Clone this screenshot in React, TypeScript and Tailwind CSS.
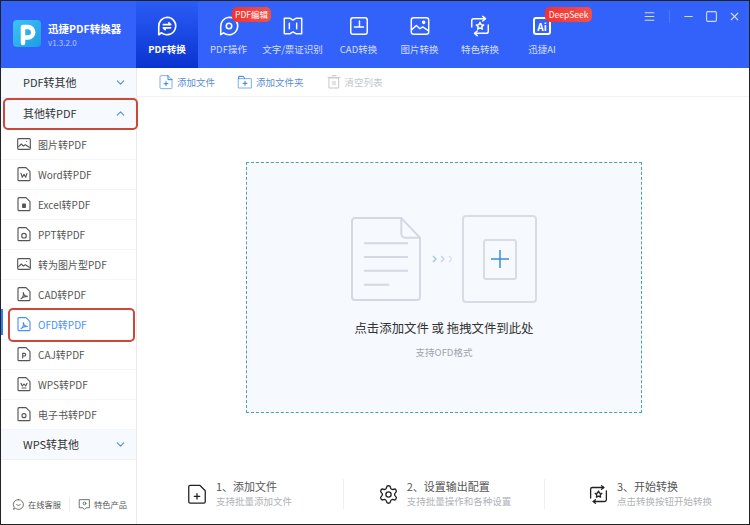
import type { ReactNode } from "react";
import { ChevronDown, ChevronUp, Menu, Minus, Settings, Square, X } from "lucide-react";

type TabInfo = { label: string; width: string; icon: ReactNode; badge?: string; badgeClass?: string };

function Ico({ size, children, sw = 1.5 }: { size: number; children: ReactNode; sw?: number }) {
  return (
    <svg width={size} height={size} viewBox="0 0 24 24" fill="none" stroke="currentColor" strokeWidth={sw} strokeLinecap="round" strokeLinejoin="round">
      {children}
    </svg>
  );
}

const filePath = "M3 4a1.500 1.500 0 0 1 1.500-1.500H15l6 6v12a1.500 1.500 0 0 1-1.500 1.500h-15A1.500 1.500 0 0 1 3 20.500z";

const tabs: TabInfo[] = [
  {
    label: "PDF操作",
    width: "w-[61px]",
    badge: "PDF编辑",
    badgeClass: "left-[34px] w-[39px]",
    icon: (
      <Ico size={22} sw={1.7}>
        <path d="M12 2.500a9.500 9.500 0 1 1-6 16.900L3 21.500v-9a9.500 9.500 0 0 1 9-10z" />
        <circle cx="12" cy="12" r="3" />
      </Ico>
    ),
  },
  {
    label: "文字/票证识别",
    width: "w-[67px]",
    icon: (
      <Ico size={22} sw={1.6}>
        <path d="M2.500 3.500h6l3.500 2 3.500-2h6v17h-6l-3.500-2-3.500 2h-6z" />
        <path d="M8 9v6M16 9v6" />
      </Ico>
    ),
  },
  {
    label: "CAD转换",
    width: "w-[65px]",
    icon: (
      <Ico size={22} sw={1.6}>
        <rect x="3" y="3" width="18" height="18" rx="2.500" />
        <path d="M12.500 6.500v6.500M7 13h10" />
      </Ico>
    ),
  },
  {
    label: "图片转换",
    width: "w-[57px]",
    icon: (
      <Ico size={22} sw={1.6}>
        <rect x="2.500" y="3" width="19" height="18" rx="2.500" />
        <path d="M3 16l5-4.500 4 3.500 3-2 6 4" />
        <circle cx="16" cy="8" r="1.200" fill="currentColor" />
      </Ico>
    ),
  },
  {
    label: "特色转换",
    width: "w-[64px]",
    icon: (
      <Ico size={22} sw={1.6}>
        <path d="M17 4H5a2 2 0 0 0-2 2v7M7 20h12a2 2 0 0 0 2-2v-7" />
        <path d="M15 1.500L18 4l-3 2.500M9 17.500L6 20l3 2.500" />
        <path d="M12 8l1.200 2.500 2.800.300-2 1.900.500 2.800-2.500-1.400-2.500 1.400.500-2.800-2-1.900 2.800-.300z" />
      </Ico>
    ),
  },
  {
    label: "迅捷AI",
    width: "w-[60px]",
    badge: "DeepSeek",
    badgeClass: "left-[33px] w-[47px]",
    icon: (
      <div className="flex h-[18px] w-[18px] items-center justify-center rounded-[3px] border-2 border-white text-[10px] font-bold text-white">
        Ai
      </div>
    ),
  },
];

const pictureMark = <path d="M4 16l4-4 3 3 3-2 6 4M16 8h.01" />;
const pdfMark = <path d="M7.500 19c2.500-1.500 4-6 3.500-9 .5 3 3 5.500 6 5.500-3.500 0-7 1-9.500 3.500z" />;

const items: { label: string; mark: ReactNode }[] = [
  { label: "图片转PDF", mark: pictureMark },
  { label: "Word转PDF", mark: <path d="M7.500 11l2 6 2.500-4.500 2.500 4.500 2-6" /> },
  { label: "Excel转PDF", mark: <path d="M10 12h4v5h-4z" fill="currentColor" /> },
  { label: "PPT转PDF", mark: <circle cx="12" cy="14.500" r="3.500" /> },
  { label: "转为图片型PDF", mark: pictureMark },
  { label: "CAD转PDF", mark: pdfMark },
  { label: "OFD转PDF", mark: pdfMark },
  { label: "CAJ转PDF", mark: <path d="M10 18v-7h2.500a2 2 0 0 1 0 4H10" /> },
  { label: "WPS转PDF", mark: <path d="M7.500 11l2 4 2.500-3 2.500 3 2-4M9 18h6" /> },
  { label: "电子书转PDF", mark: <circle cx="12" cy="14.500" r="3" /> },
];

function SideItem({ label, mark }: { label: string; mark: ReactNode }) {
  const active = label === "OFD转PDF";
  const square = label === "图片转PDF" || label === "转为图片型PDF";
  return (
    <div className={`relative flex h-[30px] items-center gap-[6px] border-b border-[#f4f5f7] pb-px pl-[15px] text-[10px] ${active ? "text-[#4a90f5]" : "text-[#555]"}`}>
      {active && <div className="absolute bottom-[4px] left-0 top-[-1px] w-[2px] bg-[#2f7bf0]" />}
      <Ico size={16} sw={1.700}>
        {square ? <rect x="2.500" y="4" width="19" height="16" rx="1.500" /> : <path d={filePath} />}
        {mark}
      </Ico>
      <span>{label}</span>
      {active && <div className="absolute -top-[2px] bottom-[-3px] left-[7px] right-[1px] rounded-[5px] border-2 border-[#c9483a]" />}
    </div>
  );
}

function GroupRow({ label, open }: { label: string; open?: boolean }) {
  return (
    <div className={`flex items-center justify-between bg-[#f6f9fd] pl-[22px] pr-[9px] text-[11px] text-[#333] ${open ? "relative h-[32px] pb-[2px]" : "h-[30px] border-b border-[#eef0f3]"}`}>
      <span>{label}</span>
      {open ? <ChevronUp size={13} className="text-[#4a90d9]" /> : <ChevronDown size={13} className="text-[#4a90d9]" />}
      {open && <div className="absolute inset-y-0 left-[2px] right-[-2px] rounded-[5px] border-2 border-[#c9483a]" />}
    </div>
  );
}

function ToolButton({ label, icon, muted }: { label: string; icon: ReactNode; muted?: boolean }) {
  return (
    <div className={`flex items-center gap-[3px] text-[9.500px] ${muted ? "text-[#c4c7cc]" : "text-[#5b8fd6]"}`}>
      {icon}
      <span>{label}</span>
    </div>
  );
}

function Step({ title, desc, icon, width }: { title: string; desc: string; icon: ReactNode; width: string }) {
  return (
    <div className={`flex items-center justify-center gap-[8px] ${width}`}>
      <div className="text-[#222]">{icon}</div>
      <div>
        <div className="text-[11px] leading-[15px] text-[#555]">{title}</div>
        <div className="text-[9.500px] leading-[15px] text-[#b0b3b8]">{desc}</div>
      </div>
    </div>
  );
}

export default function App() {
  return (
    <div className="flex h-[525px] w-[750px] flex-col overflow-hidden border border-[#222] bg-white font-['Noto_Sans_CJK_SC','Noto_Sans',sans-serif]">
      <header className="flex h-[67px] shrink-0 bg-[#3362fb] text-white">
        <div className="flex w-[135px] shrink-0 items-start pl-[12px] pt-[19px]">
          <div className="flex h-[27px] w-[28px] items-center justify-center rounded-[4px] bg-gradient-to-br from-[#3cc4f5] to-[#1c9de2]">
            <svg width="24" height="24" viewBox="0 0 24 24" fill="none" stroke="#fff" strokeWidth="4.500" strokeLinecap="round" strokeLinejoin="round">
              <path d="M8 21V5h5a5 5 0 0 1 0 10.500h-3" />
            </svg>
          </div>
          <div className="ml-[7px]">
            <div className="text-[10.500px] font-bold leading-[17px]">迅捷PDF转换器</div>
            <div className="text-[8px] leading-[12px] text-[#b9c9fb]">v1.3.2.0</div>
          </div>
        </div>

        <div className="flex w-[62px] flex-col items-center bg-gradient-to-b from-[#2b5cf6] to-[#0a33cf] pt-[14px]">
          <Ico size={22} sw={1.800}>
            <path d="M12 2.500a9.500 9.500 0 1 1-6 16.900L3 21.500v-9a9.500 9.500 0 0 1 9-10z" />
            <path d="M8 10.500h8l-2-2M16 14H8l2 2" />
          </Ico>
          <span className="mt-[4px] text-[9.500px] font-bold leading-[16px]">PDF转换</span>
        </div>

        {tabs.map((t) => (
          <div key={t.label} className={`relative flex flex-col items-center pt-[14px] ${t.width}`}>
            <div className="flex h-[22px] items-center">{t.icon}</div>
            <span className="mt-[4px] whitespace-nowrap text-[9.500px] leading-[16px] text-[#d4defd]">{t.label}</span>
            {t.badge && (
              <div className={`absolute top-[6px] flex h-[15px] items-center justify-center rounded-[5px] bg-gradient-to-r from-[#f5302c] to-[#f2504a] text-[8.500px] text-white ${t.badgeClass}`}>
                {t.badge}
              </div>
            )}
          </div>
        ))}

        <div className="ml-auto flex items-start pr-[8px] pt-[9px] text-[#cfdafd]">
          <Menu size={13} />
          <div className="ml-[13px] h-[13px] w-px bg-[#4d78fb]" />
          <Minus size={13} className="ml-[12px]" />
          <Square size={13} className="ml-[10px]" />
          <X size={13} className="ml-[10px]" />
        </div>
      </header>

      <div className="flex min-h-0 flex-1">
        <aside className="flex w-[136px] shrink-0 flex-col border-r border-[#e8eaee]">
          <GroupRow label="PDF转其他" />
          <GroupRow label="其他转PDF" open />
          {items.map((it) => (
            <SideItem key={it.label} label={it.label} mark={it.mark} />
          ))}
          <GroupRow label="WPS转其他" />
          <div className="mt-auto flex h-[38px] items-center gap-[8px] pb-[2px] pl-[11px] text-[8.250px] text-[#555]">
            <div className="flex items-center gap-[3px]">
              <Ico size={13}>
                <path d="M12 3a9 9 0 1 1-5.500 16L3 21l1-4a9 9 0 0 1 8-14z" />
                <path d="M8.500 12c1 2.500 6 2.500 7 0" />
              </Ico>
              在线客服
            </div>
            <div className="h-[15px] w-px bg-[#ececec]" />
            <div className="flex items-center gap-[3px]">
              <Ico size={13}>
                <path d="M3 3h18v15h-6l-3 3-3-3H3z" />
                <circle cx="12" cy="10" r="2.500" />
              </Ico>
              特色产品
            </div>
          </div>
        </aside>

        <main className="flex min-w-0 flex-1 flex-col">
          <div className="flex h-[29px] shrink-0 items-center gap-[22px] border-b border-[#f1f2f4] pl-[21px]">
            <ToolButton
              label="添加文件"
              icon={
                <Ico size={16} sw={1.500}>
                  <path d={filePath} stroke="#7fb0e0" />
                  <path d="M15 2.500v6h6" stroke="#2f80e8" />
                  <path d="M9 14.500h6M12 11.500v6" stroke="#2f80e8" />
                </Ico>
              }
            />
            <ToolButton
              label="添加文件夹"
              icon={
                <Ico size={16} sw={1.500}>
                  <path d="M2.500 7h19v14h-19z" stroke="#7fb0e0" />
                  <path d="M2.500 7V3.500h7l2 3.500" stroke="#2f80e8" />
                  <path d="M9 14h6M12 11v6" stroke="#2f80e8" />
                </Ico>
              }
            />
            <ToolButton
              label="清空列表"
              muted
              icon={
                <Ico size={16} sw={1.500}>
                  <path d="M5 6h14v15H5zM3 5h18M9 2.500h6M10.500 11v5M13.500 11v5" />
                </Ico>
              }
            />
          </div>

          <div className="flex flex-1 flex-col items-center pt-[65px]">
            <div className="ml-[2px] flex h-[251px] w-[396px] flex-col items-center border border-dashed border-[#4f9bb0] bg-[#f6f9fe] pt-[52px]">
              <div className="flex items-center">
                <svg width="71" height="86" viewBox="0 0 72 86" fill="none" stroke="#d3d8e2" strokeWidth="2" strokeLinejoin="round" strokeLinecap="round">
                  <path d="M4 1.500h47l19 20v60a3 3 0 0 1-3 3H4a3 3 0 0 1-3-3v-77a3 3 0 0 1 3-3z" />
                  <path d="M51 1.500v16a4 4 0 0 0 4 4h15" />
                  <path d="M14 27h43M14 41h43M14 55h43M14 69h24" />
                </svg>
                <svg className="mx-[10px]" width="20" height="8" viewBox="0 0 20 8" fill="none" strokeWidth="1.300">
                  <path d="M1 1l3 3-3 3" stroke="#9cc3e6" />
                  <path d="M9 1l3 3-3 3" stroke="#bcd5ec" />
                  <path d="M17 1l3 3-3 3" stroke="#d5e3f1" />
                </svg>
                <div className="flex h-[88px] w-[75px] items-center justify-center rounded-[4px] border-2 border-[#d8dce4]">
                  <div className="flex h-[41px] w-[34px] items-center justify-center rounded-[3px] border-2 border-[#d8dce4]">
                    <svg width="20" height="20" viewBox="0 0 20 20" stroke="#3a8ed8" strokeWidth="1.500">
                      <path d="M10 1v18M1 10h18" />
                    </svg>
                  </div>
                </div>
              </div>
              <div className="mt-[15px] text-[12.400px] leading-[20px] text-[#333]">点击添加文件 或 拖拽文件到此处</div>
              <div className="mt-[7px] text-[9.500px] leading-[14px] text-[#a0a4ab]">支持OFD格式</div>
            </div>

            <div className="mt-auto flex h-[60px] w-full items-center">
              <Step
                width="w-[206px] pr-[2px]"
                title="1、添加文件"
                desc="支持批量添加文件"
                icon={
                  <Ico size={22} sw={1.400}>
                    <path d={filePath} />
                    <path d="M9 14.500h6M12 11.500v6" />
                  </Ico>
                }
              />
              <div className="h-[30px] w-px bg-[#f0f1f3]" />
              <Step width="w-[200px] pl-[1px]" title="2、设置输出配置" desc="支持批量操作和各种设置" icon={<Settings size={21} strokeWidth={1.5} />} />
              <div className="h-[30px] w-px bg-[#f0f1f3]" />
              <Step
                width="w-[204px] pl-[6px]"
                title="3、开始转换"
                desc="点击转换按钮开始转换"
                icon={
                  <Ico size={21} sw={1.500}>
                    <path d="M18 4H5a2 2 0 0 0-2 2v10M6 20h13a2 2 0 0 0 2-2V8" />
                    <path d="M15.500 2L18 4l-2.500 2M8.500 18L6 20l2.500 2" />
                    <path d="M12 8l1.200 2.400 2.600.300-1.900 1.800.500 2.600-2.400-1.300-2.400 1.300.500-2.600-1.900-1.800 2.600-.300z" />
                  </Ico>
                }
              />
            </div>
          </div>
        </main>
      </div>
    </div>
  );
}
